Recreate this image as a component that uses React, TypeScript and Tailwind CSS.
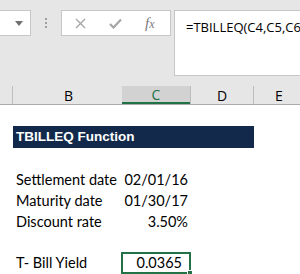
import React from "react";

const body = { fontFamily: "Lato, 'Liberation Sans', sans-serif" };

function Row({ h, b, c, cClass = "" }: { h: string; b?: string; c?: string; cClass?: string }) {
  return (
    <div className={`flex ${h} items-center text-[14.5px] text-black`} style={body}>
      <div className="w-[13px] shrink-0" />
      <div className="w-[109px] shrink-0 pl-[3px] whitespace-nowrap">{b}</div>
      <div className={`w-[68px] shrink-0 text-right pr-[2px] whitespace-nowrap ${cClass}`}>{c}</div>
      <div className="flex-1" />
    </div>
  );
}

export default function App() {
  return (
    <div className="w-[300px] h-[274px] overflow-hidden bg-white relative">
      {/* top bar */}
      <div className="h-[86px] bg-[#e6e6e6] flex items-start pt-[10px]">
        <div className="ml-[-1px] w-[32px] h-[26px] bg-white border border-[#c6c6c6] flex items-center justify-end pr-[7px] shrink-0">
          <svg width="8" height="5" viewBox="0 0 8 5"><path d="M0 0h8L4 5z" fill="#6f6f6f" /></svg>
        </div>
        <div className="w-[30px] h-[26px] flex flex-col items-center justify-center gap-[2px] shrink-0">
          <div className="w-[2px] h-[2px] bg-[#a0a0a0]" />
          <div className="w-[2px] h-[2px] bg-[#a0a0a0]" />
          <div className="w-[2px] h-[2px] bg-[#a0a0a0]" />
        </div>
        <div className="w-[110px] h-[26px] bg-white border border-[#c6c6c6] flex items-center shrink-0">
          <svg className="ml-[13px]" width="11" height="11" viewBox="0 0 11 11">
            <path d="M1 1L10 10M10 1L1 10" stroke="#a6a6a6" strokeWidth="1.4" />
          </svg>
          <svg className="ml-[23px]" width="13" height="11" viewBox="0 0 13 11">
            <path d="M1 6L4.5 9.5L12 1.5" stroke="#a6a6a6" strokeWidth="2.2" fill="none" />
          </svg>
          <span
            className="ml-[23px] text-[15px] italic text-[#7a7a7a] leading-none"
            style={{ fontFamily: "'Liberation Serif', serif" }}
          >
            f<span className="text-[12px]">x</span>
          </span>
        </div>
        <div className="ml-[3px] flex-1 h-[66px] bg-white border border-[#c6c6c6] border-r-0 pl-[11px] pt-[3px] overflow-hidden">
          <span className="text-[13px] text-black whitespace-nowrap" style={{ fontFamily: "'Open Sans', sans-serif" }}>
            =TBILLEQ(C4,C5,C6)
          </span>
        </div>
      </div>
      {/* column header */}
      <div
        className="h-[19px] bg-[#e6e6e6] flex border-b border-[#ababab] text-[14px] text-black"
        style={{ fontFamily: "'Open Sans', sans-serif" }}
      >
        <div className="w-[13px] border-r border-[#bdbdbd] shrink-0" />
        <div className="w-[109px] flex items-center justify-center shrink-0 pl-[2px]">B</div>
        <div className="w-[68px] flex items-center justify-center bg-[#d2d2d2] border-b-2 border-[#217346] text-[#217346] shrink-0">
          C
        </div>
        <div className="w-[64px] flex items-center justify-center border-x border-[#bdbdbd] shrink-0">D</div>
        <div className="flex-1 flex items-center justify-center pl-[4px]">E</div>
      </div>
      {/* rows */}
      <div className="h-[21px]" />
      <div className="flex h-[22px]">
        <div className="w-[13px] shrink-0" />
        <div
          className="w-[241px] bg-[#13294b] text-white font-bold text-[13.5px] flex items-center pl-[3px]"
          style={{ fontFamily: "'Liberation Sans', Arial, sans-serif" }}
        >
          TBILLEQ Function
        </div>
      </div>
      <div className="h-[21px]" />
      <Row h="h-[21px]" b="Settlement date" c="02/01/16" />
      <Row h="h-[21px]" b="Maturity date" c="01/30/17" />
      <Row h="h-[21px]" b="Discount rate" c="3.50%" />
      <div className="h-[20px]" />
      <div className="flex h-[22px] items-center text-[14.5px] text-black" style={body}>
        <div className="w-[13px] shrink-0" />
        <div className="w-[108px] shrink-0 pl-[3px] whitespace-nowrap">T- Bill Yield</div>
        <div className="relative w-[70px] h-[22px] shrink-0 border-2 border-[#217346] flex items-center justify-end pr-[7px]">
          0.0365
          <div className="absolute right-[-4px] bottom-[-4px] w-[6px] h-[6px] bg-[#217346] border border-white" />
        </div>
      </div>
    </div>
  );
}
